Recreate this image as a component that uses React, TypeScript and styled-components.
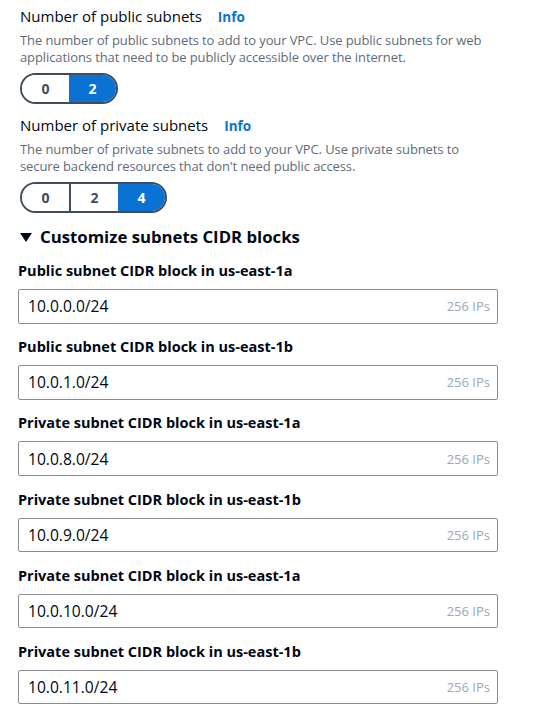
import React from "react";
import styled, { createGlobalStyle } from "styled-components";

const Global = createGlobalStyle`
  html, body { margin: 0; padding: 0; background: #ffffff; }
  body { font-family: "Open Sans", "Noto Sans", sans-serif; color: #000716; }
`;

const Page = styled.div`
  width: 537px;
  box-sizing: border-box;
  padding: 0 39px 0 18px;
  display: flex;
  flex-direction: column;
`;

const Field = styled.div<{ $top: number }>`
  margin-top: ${(p) => p.$top}px;
  padding-left: 2px;
  display: flex;
  flex-direction: column;
`;

const TitleRow = styled.div`
  display: flex;
  align-items: baseline;
  gap: 16px;
  font-size: 15px;
  line-height: 20px;
  color: #000716;
`;

const Info = styled.span`
  font-size: 13.5px;
  font-weight: 700;
  color: #0972d3;
`;

const Desc = styled.p`
  margin: 5px 0 0;
  font-size: 13px;
  letter-spacing: -0.1px;
  line-height: 17px;
  color: #5f6b7a;
`;

const Toggle = styled.div`
  margin-top: 7px;
  display: flex;
  align-self: flex-start;
  height: 31px;
  box-sizing: border-box;
  border: 2px solid #414d5c;
  border-radius: 16px;
  overflow: hidden;
`;

const Segment = styled.div<{ $selected: boolean; $divider: boolean }>`
  width: 47px;
  display: flex;
  align-items: center;
  justify-content: center;
  font-size: 14px;
  font-weight: 700;
  color: ${(p) => (p.$selected ? "#ffffff" : "#414d5c")};
  background: ${(p) => (p.$selected ? "#0972d3" : "#ffffff")};
  border-left: ${(p) => (p.$divider ? "2px solid #414d5c" : "none")};
`;

const Expander = styled.div`
  margin-top: 13.5px;
  padding-left: 2px;
  display: flex;
  align-items: center;
  gap: 8px;
  font-size: 16.75px;
  line-height: 22px;
  font-weight: 700;
  color: #000716;
`;

const Caret = styled.span`
  width: 0;
  height: 0;
  border-left: 6px solid transparent;
  border-right: 6px solid transparent;
  border-top: 9px solid #000716;
  margin-top: 1px;
`;

const CidrList = styled.div`
  margin-top: 13px;
  display: flex;
  flex-direction: column;
  gap: 13.7px;
`;

const CidrField = styled.div`
  display: flex;
  flex-direction: column;
  gap: 8px;
`;

const Label = styled.div`
  font-size: 14.5px;
  line-height: 20px;
  font-weight: 700;
  color: #000716;
`;

const InputBox = styled.div`
  height: 34.5px;
  box-sizing: border-box;
  border: 1px solid #8c8c94;
  border-radius: 2px;
  display: flex;
  align-items: center;
  justify-content: space-between;
  padding: 0 7px 0 9px;
`;

const Value = styled.span`
  font-size: 15.6px;
  color: #000716;
`;

const Hint = styled.span`
  font-size: 13px;
  color: #9ba7b6;
`;

const Toggler = ({ options, selected }: { options: string[]; selected: string }) => (
  <Toggle>
    {options.map((o, i) => (
      <Segment key={o} $selected={o === selected} $divider={i > 0 && o !== selected}>
        {o}
      </Segment>
    ))}
  </Toggle>
);

const cidrs = [
  ["Public subnet CIDR block in us-east-1a", "10.0.0.0/24"],
  ["Public subnet CIDR block in us-east-1b", "10.0.1.0/24"],
  ["Private subnet CIDR block in us-east-1a", "10.0.8.0/24"],
  ["Private subnet CIDR block in us-east-1b", "10.0.9.0/24"],
  ["Private subnet CIDR block in us-east-1a", "10.0.10.0/24"],
  ["Private subnet CIDR block in us-east-1b", "10.0.11.0/24"],
];

export default function App() {
  return (
    <>
      <Global />
      <Page>
        <Field $top={6}>
          <TitleRow>
            Number of public subnets <Info>Info</Info>
          </TitleRow>
          <Desc>
            The number of public subnets to add to your VPC. Use public subnets for web
            applications that need to be publicly accessible over the internet.
          </Desc>
          <Toggler options={["0", "2"]} selected="2" />
        </Field>
        <Field $top={10.5}>
          <TitleRow>
            Number of private subnets <Info>Info</Info>
          </TitleRow>
          <Desc>
            The number of private subnets to add to your VPC. Use private subnets to
            secure backend resources that don't need public access.
          </Desc>
          <Toggler options={["0", "2", "4"]} selected="4" />
        </Field>
        <Expander>
          <Caret />
          Customize subnets CIDR blocks
        </Expander>
        <CidrList>
          {cidrs.map(([label, value], i) => (
            <CidrField key={i}>
              <Label>{label}</Label>
              <InputBox>
                <Value>{value}</Value>
                <Hint>256 IPs</Hint>
              </InputBox>
            </CidrField>
          ))}
        </CidrList>
      </Page>
    </>
  );
}
